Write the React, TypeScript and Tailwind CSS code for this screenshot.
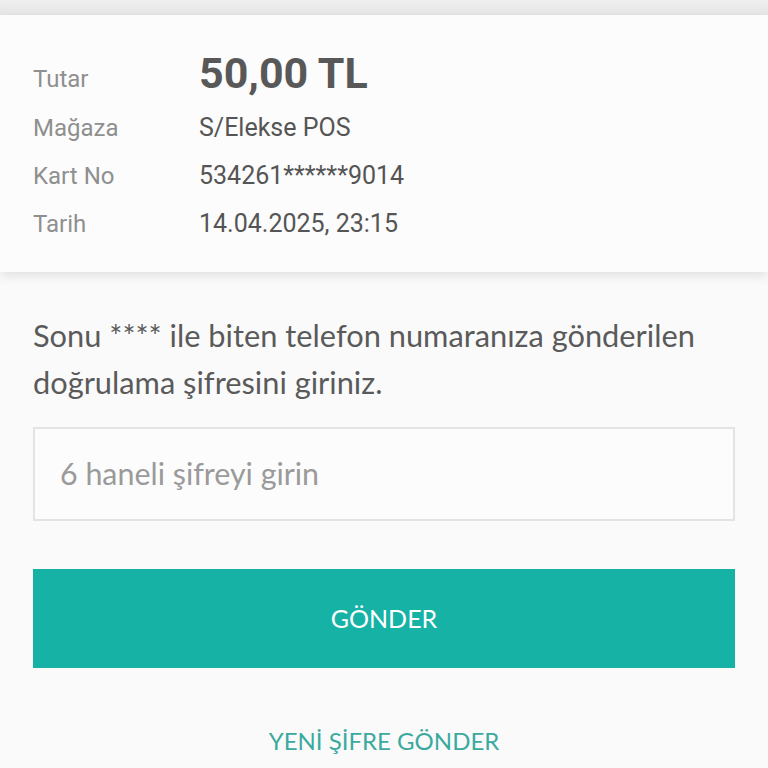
import React from "react";

export default function App() {
  const rows: [string, string][] = [
    ["Mağaza", "S/Elekse POS"],
    ["Kart No", "534261******9014"],
    ["Tarih", "14.04.2025, 23:15"],
  ];
  return (
    <div className="min-h-[768px] w-[768px] bg-[#fafafa] overflow-hidden">
      <div className="h-[15px] bg-gradient-to-b from-[#efefef] to-[#e6e6e6]" />
      <div className="bg-[#fcfcfc] shadow-[0_4px_10px_rgba(0,0,0,0.10)] pl-[33px] pt-[38px] pb-[24px] font-['Roboto',sans-serif] relative">
        <div className="flex items-center h-[51px]">
          <div className="w-[166px] text-[24px] text-[#8f8f8f]">Tutar</div>
          <div className="text-[43px] font-bold text-[#585858] leading-none -mt-[10px]">50,00 TL</div>
        </div>
        {rows.map(([k, v]) => (
          <div key={k} className="flex items-center h-[48px]">
            <div className="w-[166px] text-[24px] text-[#8f8f8f]">{k}</div>
            <div className="text-[25px] text-[#555555]">{v}</div>
          </div>
        ))}
      </div>
      <div className="px-[33px] pt-[40px] font-['Lato',sans-serif]">
        <p className="text-[30.8px] leading-[47px] text-[#5a5a5a]">
          Sonu **** ile biten telefon numaranıza gönderilen doğrulama şifresini giriniz.
        </p>
        <div className="mt-[21px] h-[94px] border-2 border-[#e3e3e3] bg-[#fcfcfc] flex items-center pl-[25px]">
          <input
            className="w-full bg-transparent outline-none text-[30.4px] placeholder:text-[#9a9a9a] text-[#555]"
            placeholder="6 haneli şifreyi girin"
          />
        </div>
        <button className="mt-[48px] w-full h-[99px] bg-[#17b2a6] text-white text-[25px]">
          GÖNDER
        </button>
        <div className="mt-[55px] text-center text-[24px] text-[#3aaa9f]">
          YENİ ŞİFRE GÖNDER
        </div>
      </div>
    </div>
  );
}
